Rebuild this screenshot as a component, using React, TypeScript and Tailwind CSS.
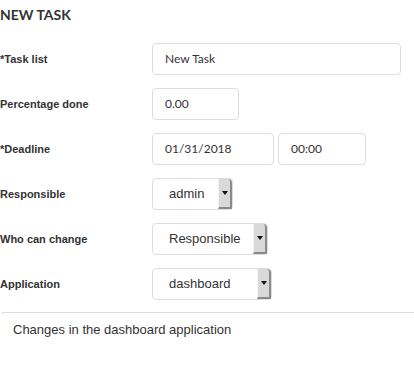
import React from "react";

const label = "text-[11px] font-bold text-[#333] font-['Liberation_Sans',Arial,sans-serif]";
const input =
  "h-8 rounded border border-[#ddd] bg-white px-3 flex items-center text-[12px] text-[#333] font-['Lato',sans-serif]";

function Select({ value, width }: { value: string; width: string }) {
  return (
    <div className={`h-8 ${width} flex rounded border border-[#ddd] bg-white`}>
      <div className="flex-1 flex items-center pl-4 text-[13px] text-[#333] font-['Liberation_Sans',Arial,sans-serif]">
        {value}
      </div>
      <div className="w-[14px] flex items-center justify-center bg-[#d9d9d9] border-l border-l-[#f4f4f4] border-r-2 border-r-[#8a8a8a] border-b-2 border-b-[#8a8a8a] rounded-tr">
        <svg width="6" height="4" viewBox="0 0 6 4">
          <path d="M0 0h6L3 4z" fill="#111" />
        </svg>
      </div>
    </div>
  );
}

function Row({ title, children }: { title: string; children: React.ReactNode }) {
  return (
    <div className="grid grid-cols-[152px_1fr] items-center">
      <div className={label}>{title}</div>
      <div className="flex gap-1">{children}</div>
    </div>
  );
}

export default function App() {
  return (
    <div className="w-[414px] h-[376px] bg-white overflow-hidden">
      <h1 className="pt-[7px] text-[14px] font-bold text-[#333] font-['Lato',sans-serif] leading-4">NEW TASK</h1>
      <div className="mt-[20px] flex flex-col gap-[13px]">
        <Row title="*Task list">
          <div className={`${input} w-[249px]`}>New Task</div>
        </Row>
        <Row title="Percentage done">
          <div className={`${input} w-[87px]`}>0.00</div>
        </Row>
        <Row title="*Deadline">
          <div className={`${input} w-[122px]`}>01/31/2018</div>
          <div className={`${input} w-[88px]`}>00:00</div>
        </Row>
        <Row title="Responsible">
          <Select value="admin" width="w-[81px]" />
        </Row>
        <Row title="Who can change">
          <Select value="Responsible" width="w-[116px]" />
        </Row>
        <Row title="Application">
          <Select value="dashboard" width="w-[120px]" />
        </Row>
      </div>
      <div className="mt-[12px] w-[430px] h-[80px] rounded-tl border-t border-l border-t-[#ddd] border-l-transparent px-3 pt-[7px] text-[13px] text-[#333] font-['Liberation_Sans',Arial,sans-serif]">
        Changes in the dashboard application
      </div>
    </div>
  );
}
